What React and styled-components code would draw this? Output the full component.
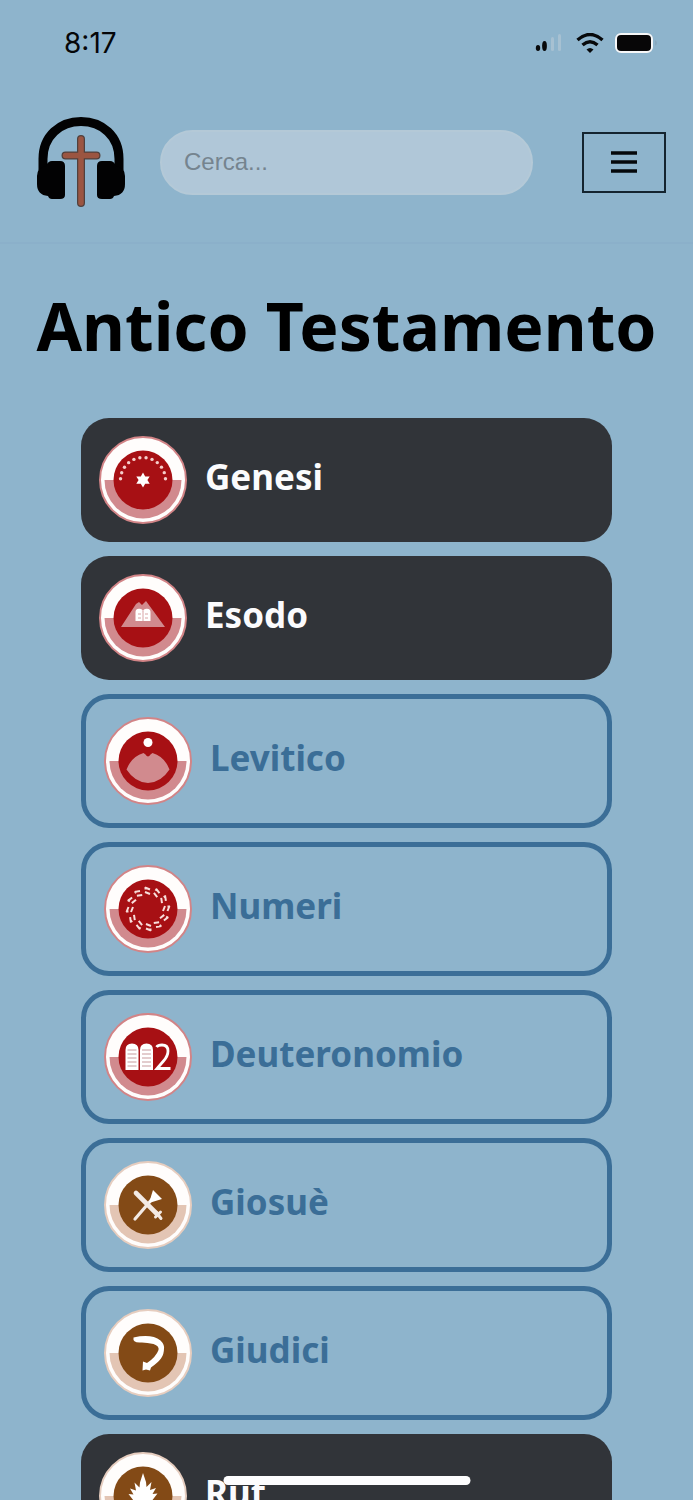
import styled, { createGlobalStyle } from "styled-components";

const GlobalStyle = createGlobalStyle`
* {
  box-sizing: border-box;
}
body {
  margin: 0;
  background-color: #8eb4cc;
  font-family: "Noto Sans", sans-serif;
}
`;

const StatusBar = styled.div`
display: flex;
align-items: center;
justify-content: space-between;
height: 86px;
padding: 0 35px 0 64px;
font-family: Inter, sans-serif;
font-size: 28px;
color: #050608;
`;

const StatusIcons = styled.div`
display: flex;
align-items: center;
gap: 11px;

svg {
  display: block;
}
`;

const Header = styled.header`
display: flex;
align-items: center;
height: 158px;
padding: 0 27px 4px 36px;
border-bottom: 2px solid #8bb0ca;
`;

const HomeLink = styled.a`
display: block;
width: 90px;
height: 92px;
flex-shrink: 0;
`;

const SearchForm = styled.form`
flex: 1;
min-width: 0;
margin: 0 49px 0 34px;
`;

const SearchInput = styled.input`
display: block;
width: 100%;
height: 65px;
padding: 0 22px;
border: 2px solid #b4c9d7;
border-radius: 33px;
outline: none;
background-color: #b0c7d8;
font-family: "Liberation Sans", Arial, sans-serif;
font-size: 24px;
color: #333;

&::placeholder {
  color: #75848f;
  opacity: 1;
}
`;

const MenuButton = styled.button`
display: flex;
align-items: center;
justify-content: center;
width: 84px;
height: 61px;
flex-shrink: 0;
padding: 0;
border: 2px solid #14242f;
background-color: transparent;
color: #05080b;
cursor: pointer;
`;

const Title = styled.h1`
margin: 0;
padding: 33px 0 45px;
font-size: 66px;
line-height: 96px;
font-weight: 700;
text-align: center;
color: #000;
`;

const BookList = styled.ul`
display: flex;
flex-direction: column;
gap: 14px;
margin: 0;
padding: 0 81px 24px;
list-style: none;
`;

const BookCard = styled.a`
display: flex;
align-items: center;
gap: 17px;
padding: 17px;
border: ${({ $read }) => ($read ? "none" : "5px solid #3b6e97")};
border-radius: 28px;
background-color: ${({ $read }) => ($read ? "#313439" : "transparent")};
color: ${({ $read }) => ($read ? "#fbfbfd" : "#3b6e97")};
text-decoration: none;

svg {
  display: block;
  width: 90px;
  height: 90px;
  flex-shrink: 0;
}
`;

const BookName = styled.span`
padding-bottom: 6px;
font-size: 35px;
line-height: 48px;
font-weight: 700;
`;

const HomeIndicator = styled.div`
position: fixed;
bottom: 15px;
left: 50%;
width: 247px;
height: 9px;
border-radius: 5px;
background-color: #fdfdfe;
transform: translateX(-50%);
`;

const red = { ring: "#d28487", tint: "#d18a8e", core: "#a71014" };
const brown = { ring: "#e6cdbf", tint: "#e3c5b4", core: "#834a16" };

const polar = (r, deg) => {
  const a = (deg * Math.PI) / 180;
  return [45 + r * Math.cos(a), 45 + r * Math.sin(a)];
};

const StarsGlyph = () => (
  <g>
    {Array.from({ length: 12 }, (_, i) => {
      const [x, y] = polar(22.5, 183 + i * 15.8);
      return <circle key={i} cx={x} cy={y} r="1.700" fill="#f6cfcb" />;
    })}
    <path d="M45 37.500l2.200 3.900h4.500L49.400 45l2.300 3.800h-4.500L45 52.500l-2.200-3.700h-4.500l2.300-3.800-2.300-3.600h4.500z" fill="#fff" />
  </g>
);

const MountainGlyph = () => (
  <g>
    <path d="M23 54L38 31l3-2 3 3 4-4 19 26z" fill="#d18a8e" />
    <path d="M37.500 48V39.500a3.700 3.500 0 0 1 7.500-.5 3.700 3.500 0 0 1 7.500 .5V48z" fill="#fff" />
    <path d="M45 38v10M40 41h3M40 45h3M47 41h3M47 45h3" stroke="#d8a4a6" strokeWidth="1" />
  </g>
);

const PriestGlyph = () => (
  <g>
    <circle cx="45" cy="26.500" r="4.500" fill="#fff" />
    <path d="M23.500 53.500q5-13 17-16.500l2 1.500q2.500 4 5 0l2-1.500q12 3.500 17 16.500Q58 66.500 45 67 32 66.500 23.500 53.500z" fill="#d18a8e" />
  </g>
);

const TribesGlyph = () => (
  <g stroke="#f8dedb" strokeWidth="2" fill="none">
    {Array.from({ length: 12 }, (_, i) => (
      <path key={i} d="M42 23.500l5 2M42 28l5 2M42.500 23v2.500" transform={`rotate(${i * 30} 45 45)`} />
    ))}
  </g>
);

const TablesGlyph = () => (
  <g>
    <path d="M22.500 58V38q0-6.500 6.500-6.500t6.500 6.500v20zM37 58V38q0-6.500 6.500-6.500T50 38v20z" fill="#fff" />
    <path d="M24.500 38h9M24.500 42h9M24.500 46h9M24.500 50h9M24.500 54h9M39 38h9M39 42h9M39 46h9M39 50h9M39 54h9" stroke="#c79a9d" strokeWidth="1" />
    <path d="M53.500 35q1.500-2 5.500-2 6 0 6 6 0 5-4.500 10L54 56.500h13.500" stroke="#fff" strokeWidth="2.800" fill="none" />
  </g>
);

const SwordsGlyph = () => (
  <g strokeLinecap="round" fill="none">
    <path d="M32 59L50 38" stroke="#f3eae4" strokeWidth="3.200" />
    <path d="M50 30l9 9-13 4z" fill="#fff" />
    <path d="M33 33l21 21" stroke="#f3eae4" strokeWidth="4.600" />
    <path d="M53 52l5 6.500M57.500 52l-5 5" stroke="#f3eae4" strokeWidth="3" />
  </g>
);

const HornGlyph = () => (
  <path
    d="M30.500 29.500q18-4 27 3 4 4 3.500 8 0 6-3 10-3 4-10 9l-1 3-4-1-3.500 1 .5-9 4 1.500q9-6 11.500-13 1-4-5-6-8-2-14-1.500-7 0-6-5z"
    fill="#fff"
  />
);

const WheatGlyph = () => (
  <path
    d="M45 22l3 9 .5 5 5-5-1.500 8 6-2-3.500 6 5-.5-5 6.500 4 1-7 4.500 1 3-5.500-1V68h-3V57l-5.500 1 1-3-8-4.500 4-1-5-6.500 5 .5-3.500-6 6 2-1.500-8 5 5 .5-5z"
    fill="#fff"
  />
);

const Medallion = ({ palette, glyph: Glyph }) => (
  <svg viewBox="0 0 90 90" aria-hidden="true">
    <circle cx="45" cy="45" r="43" fill="#fffdfc" stroke={palette.ring} strokeWidth="2" />
    <path d="M6.500 45a38.500 38.500 0 0 0 77 0z" fill={palette.tint} />
    <circle cx="45" cy="45" r="29.500" fill={palette.core} />
    <Glyph />
  </svg>
);

const books = [
  { name: "Genesi", slug: "genesi", palette: red, glyph: StarsGlyph, read: true },
  { name: "Esodo", slug: "esodo", palette: red, glyph: MountainGlyph, read: true },
  { name: "Levitico", slug: "levitico", palette: red, glyph: PriestGlyph },
  { name: "Numeri", slug: "numeri", palette: red, glyph: TribesGlyph },
  { name: "Deuteronomio", slug: "deuteronomio", palette: red, glyph: TablesGlyph },
  { name: "Giosuè", slug: "giosue", palette: brown, glyph: SwordsGlyph },
  { name: "Giudici", slug: "giudici", palette: brown, glyph: HornGlyph },
  { name: "Rut", slug: "rut", palette: brown, glyph: WheatGlyph, read: true },
];

const Logo = () => (
  <svg width="90" height="92" viewBox="0 0 90 92" aria-hidden="true">
    <path d="M7 54V43C7 20 24 5.500 45 5.500S83 20 83 43v11" fill="none" stroke="#020203" strokeWidth="9" />
    <path d="M16 45h8q5 0 5 5v29q0 4-5 4h-8q-3 0-4-3Q1 79 1 68V60q0-8 9-10 2-5 6-5z" fill="#020203" />
    <path d="M74 45h-8q-5 0-5 5v29q0 4 5 4h8q3 0 4-3 11-1 11-12V60q0-8-9-10-2-5-6-5z" fill="#020203" />
    <path d="M45 23v64M29.500 39.500h31" stroke="#51403c" strokeWidth="8" strokeLinecap="round" />
    <path d="M45 23v64M29.500 39.500h31" stroke="#9b5541" strokeWidth="5.500" strokeLinecap="round" />
  </svg>
);

function App() {
  return (
    <>
      <GlobalStyle />
      <StatusBar>
        <span>8:17</span>
        <StatusIcons>
          <svg width="30" height="20" viewBox="0 0 30 20" aria-hidden="true">
            <ellipse cx="3" cy="15" rx="2.200" ry="3" fill="#07090b" />
            <ellipse cx="9.500" cy="13" rx="2.400" ry="5" fill="#07090b" />
            <rect x="16" y="4" width="3" height="14" rx="1.500" fill="#a7c1d2" />
            <rect x="23" y="1" width="3" height="17" rx="1.500" fill="#a7c1d2" />
          </svg>
          <svg width="28" height="20" viewBox="0 0 28 20" fill="none" stroke="#07090b" aria-hidden="true">
            <path d="M1.500 7q12.500-11 25 0" strokeWidth="3.400" />
            <path d="M6.500 12q7.500-6.500 15 0" strokeWidth="3.400" />
            <path d="M14 20l-3.500-3.500q3.500-3 7 0z" fill="#07090b" stroke="none" />
          </svg>
          <svg width="43" height="20" viewBox="0 0 43 20" aria-hidden="true">
            <rect x="1" y="1" width="36" height="18" rx="5" fill="#070607" stroke="#f6f7f8" strokeWidth="2" />
            <path d="M40.500 7q2 3 0 6z" fill="#829aab" />
          </svg>
        </StatusIcons>
      </StatusBar>
      <Header>
        <HomeLink href="#home" aria-label="Home">
          <Logo />
        </HomeLink>
        <SearchForm role="search">
          <SearchInput type="search" placeholder="Cerca..." aria-label="Cerca" />
        </SearchForm>
        <MenuButton type="button" aria-label="Menu">
          <svg width="28" height="24" viewBox="0 0 28 24" aria-hidden="true">
            <path d="M1 3h26M1 12h26M1 21h26" stroke="currentColor" strokeWidth="3.500" />
          </svg>
        </MenuButton>
      </Header>
      <main>
        <Title>Antico Testamento</Title>
        <BookList>
          {books.map((book) => (
            <li key={book.slug}>
              <BookCard href={`#${book.slug}`} $read={book.read}>
                <Medallion palette={book.palette} glyph={book.glyph} />
                <BookName>{book.name}</BookName>
              </BookCard>
            </li>
          ))}
        </BookList>
      </main>
      <HomeIndicator />
    </>
  );
}

export default App;
